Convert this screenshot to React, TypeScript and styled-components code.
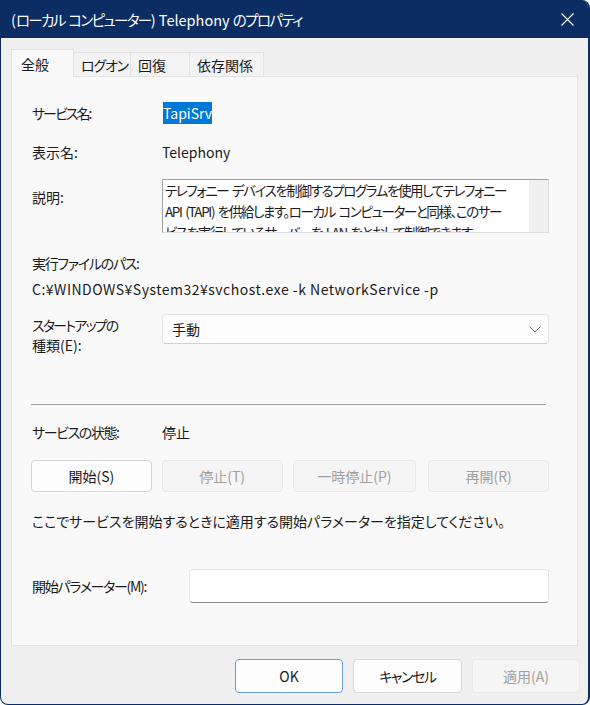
import styled, { createGlobalStyle } from "styled-components";

const GlobalStyle = createGlobalStyle`
  html, body {
    margin: 0;
    padding: 0;
    background: #ffffff;
  }
  #root {
    width: 590px;
    height: 705px;
  }
`;

const Window = styled.div`
  width: 590px;
  height: 705px;
  box-sizing: border-box;
  display: flex;
  flex-direction: column;
  background: #f0f0f0;
  border: 1px solid #0c2d63;
  border-top: none;
  border-right-width: 2px;
  border-radius: 0 8px 8px 8px;
  overflow: hidden;
  font-family: "Noto Sans CJK JP", "Noto Sans", sans-serif;
  font-feature-settings: "palt";
  font-size: 14px;
  color: #1b1b1b;
`;

// Japanese katakana runs are narrow in the original UI font
const Kana = styled.span<{ $ls?: number }>`
  letter-spacing: ${(p) => p.$ls ?? -1.3}px;
`;

const TitleBar = styled.div`
  flex: none;
  height: 38px;
  display: flex;
  align-items: center;
  justify-content: space-between;
  padding: 0 14px 0 10px;
  background: #0c2d63;
  color: #ffffff;
  font-size: 14.5px;
`;

const CloseIcon = () => (
  <svg width="13" height="13" viewBox="0 0 13 13">
    <path d="M0.5 0.5L12.5 12.5M12.5 0.5L0.5 12.5" stroke="#ffffff" strokeWidth="1.1" />
  </svg>
);

const Body = styled.div`
  flex: 1;
  display: flex;
  flex-direction: column;
  padding: 11px 10px 0 10px;
`;

const TabStrip = styled.div`
  display: flex;
  align-items: flex-end;
  height: 28px;
  margin-bottom: -1px;
  position: relative;
  z-index: 1;
`;

const Tab = styled.div<{ $active?: boolean; $w: number }>`
  box-sizing: border-box;
  width: ${(p) => p.$w}px;
  height: ${(p) => (p.$active ? 28 : 25)}px;
  display: flex;
  align-items: center;
  padding-left: ${(p) => (p.$active ? 9 : 7)}px;
  border: 1px solid #e3e3e3;
  border-bottom: ${(p) => (p.$active ? "none" : "1px solid #e3e3e3")};
  border-left: ${(p) => (p.$active ? "1px solid #e3e3e3" : "none")};
  background: ${(p) => (p.$active ? "#f9f9f9" : "#f3f3f3")};
  white-space: nowrap;
`;

const Panel = styled.div`
  box-sizing: border-box;
  height: 570px;
  display: flex;
  flex-direction: column;
  padding: 26px 28px 0 20px;
  background: #f9f9f9;
  border: 1px solid #e3e3e3;
`;

const Row = styled.div<{ $mt: number; $center?: boolean }>`
  display: flex;
  align-items: ${(p) => (p.$center ? "center" : "flex-start")};
  margin-top: ${(p) => p.$mt}px;
  line-height: 20px;
`;

const Label = styled.div<{ $w?: number; $pt?: number }>`
  flex: none;
  width: ${(p) => p.$w ?? 130}px;
  padding-top: ${(p) => p.$pt ?? 0}px;
  white-space: nowrap;
`;

const Value = styled.div<{ $ls?: number }>`
  white-space: nowrap;
  letter-spacing: ${(p) => p.$ls ?? 0}px;
`;

const Selected = styled.span`
  margin-left: 1px;
  background: #0078d7;
  color: #ffffff;
  padding: 1px 0;
`;

const DescBox = styled.div`
  box-sizing: border-box;
  width: 389px;
  height: 54px;
  display: flex;
  background: #ffffff;
  border: 1px solid #dcdcdc;
  border-top-color: #a0a0a0;
  border-left-color: #a0a0a0;
  overflow: hidden;
`;

const DescText = styled.div`
  flex: 1;
  min-width: 0;
  padding-left: 2px;
  font-size: 13.5px;
  letter-spacing: -1.4px;
  word-spacing: 2px;
  line-height: 21px;
  overflow: hidden;
`;

const DescLine = styled.div`
  white-space: nowrap;
`;

const ScrollTrack = styled.div`
  flex: none;
  width: 19px;
  background: #f0f0f0;
`;

const Select = styled.div`
  box-sizing: border-box;
  width: 389px;
  height: 30px;
  display: flex;
  align-items: center;
  justify-content: space-between;
  padding: 0 7px 0 9px;
  background: #fdfdfd;
  border: 1px solid #e5e5e5;
  border-bottom-color: #d2d2d2;
  border-radius: 4px;
`;

const Chevron = () => (
  <svg width="12" height="7" viewBox="0 0 12 7">
    <path d="M0.5 0.5L6 6L11.5 0.5" fill="none" stroke="#7a7a7a" strokeWidth="1" />
  </svg>
);

const Separator = styled.div`
  margin-top: 49px;
  margin-left: -1px;
  width: 515px;
  height: 1px;
  background: #a0a0a0;
`;

const ButtonRow = styled.div`
  display: flex;
  margin-top: 18px;
  margin-left: -1px;
`;

const Button = styled.div<{ $disabled?: boolean; $w: number; $ml?: number; $h?: number; $focus?: boolean }>`
  box-sizing: border-box;
  width: ${(p) => p.$w}px;
  height: ${(p) => p.$h ?? 32}px;
  margin-left: ${(p) => p.$ml ?? 0}px;
  display: flex;
  align-items: center;
  justify-content: center;
  border-radius: 4px;
  border: 1px solid ${(p) => (p.$focus ? "#6aa0dc" : p.$disabled ? "#e8e8e8" : "#d5d5d5")};
  background: ${(p) => (p.$disabled ? "#f5f5f5" : "#fdfdfd")};
  color: ${(p) => (p.$disabled ? "#a0a0a0" : "#1b1b1b")};
  white-space: nowrap;
`;

const Hint = styled.div`
  margin-top: 19px;
  line-height: 20px;
  white-space: nowrap;
`;

const Input = styled.div`
  box-sizing: border-box;
  width: 362px;
  height: 34px;
  background: #ffffff;
  border: 1px solid #e5e5e5;
  border-bottom-color: #8a8a8a;
  border-radius: 4px;
`;

const Footer = styled.div`
  display: flex;
  justify-content: flex-end;
  padding-top: 13px;
  margin-right: -2px;
`;

export default function App() {
  return (
    <>
      <GlobalStyle />
      <Window>
        <TitleBar>
          <span>
            (<Kana $ls={-1.6}>ローカル</Kana> <Kana $ls={-1.6}>コンピューター</Kana>) Telephony{" "}
            <Kana $ls={-1.6}>のプロパティ</Kana>
          </span>
          <CloseIcon />
        </TitleBar>
        <Body>
          <TabStrip>
            <Tab $active $w={63}>全般</Tab>
            <Tab $w={57}><Kana $ls={-1.2}>ログオン</Kana></Tab>
            <Tab $w={59}>回復</Tab>
            <Tab $w={74}>依存関係</Tab>
          </TabStrip>
          <Panel>
            <Row $mt={0}>
              <Label><Kana $ls={-2}>サービス名:</Kana></Label>
              <Value>
                <Selected>TapiSrv</Selected>
              </Value>
            </Row>
            <Row $mt={19}>
              <Label>表示名:</Label>
              <Value>Telephony</Value>
            </Row>
            <Row $mt={17}>
              <Label $pt={8}>説明:</Label>
              <DescBox>
                <DescText>
                  <DescLine>テレフォニー デバイスを制御するプログラムを使用してテレフォニー</DescLine>
                  <DescLine>API (TAPI) を供給します。ローカル コンピューターと同様、このサー</DescLine>
                  <DescLine>ビスを実行しているサーバーを LAN をとおして制御できます。</DescLine>
                </DescText>
                <ScrollTrack />
              </DescBox>
            </Row>
            <Row $mt={20}>
              <Label $w={300}><Kana>実行ファイルのパス:</Kana></Label>
            </Row>
            <Row $mt={6}>
              <Value $ls={0.5}>C:¥WINDOWS¥System32¥svchost.exe -k NetworkService -p</Value>
            </Row>
            <Row $mt={15}>
              <Label $pt={1}>
                <Kana $ls={-1.8}>スタートアップの</Kana>
                <br />
                種類(E):
              </Label>
              <Select>
                <span>手動</span>
                <Chevron />
              </Select>
            </Row>
            <Separator />
            <Row $mt={17}>
              <Label><Kana $ls={-1.4}>サービスの状態:</Kana></Label>
              <Value>停止</Value>
            </Row>
            <ButtonRow>
              <Button $w={121}>開始(S)</Button>
              <Button $w={121} $ml={10} $disabled>停止(T)</Button>
              <Button $w={124} $ml={10} $disabled>一時停止(P)</Button>
              <Button $w={121} $ml={12} $disabled>再開(R)</Button>
            </ButtonRow>
            <Hint>ここでサービスを開始するときに適用する開始パラメーターを指定してください。</Hint>
            <Row $mt={38} $center>
              <Label $w={157}><Kana>開始パラメーター(M):</Kana></Label>
              <Input />
            </Row>
          </Panel>
          <Footer>
            <Button $w={108} $h={34} $focus>OK</Button>
            <Button $w={109} $h={34} $ml={10}><Kana $ls={-1.4}>キャンセル</Kana></Button>
            <Button $w={108} $h={34} $ml={10} $disabled>適用(A)</Button>
          </Footer>
        </Body>
      </Window>
    </>
  );
}
